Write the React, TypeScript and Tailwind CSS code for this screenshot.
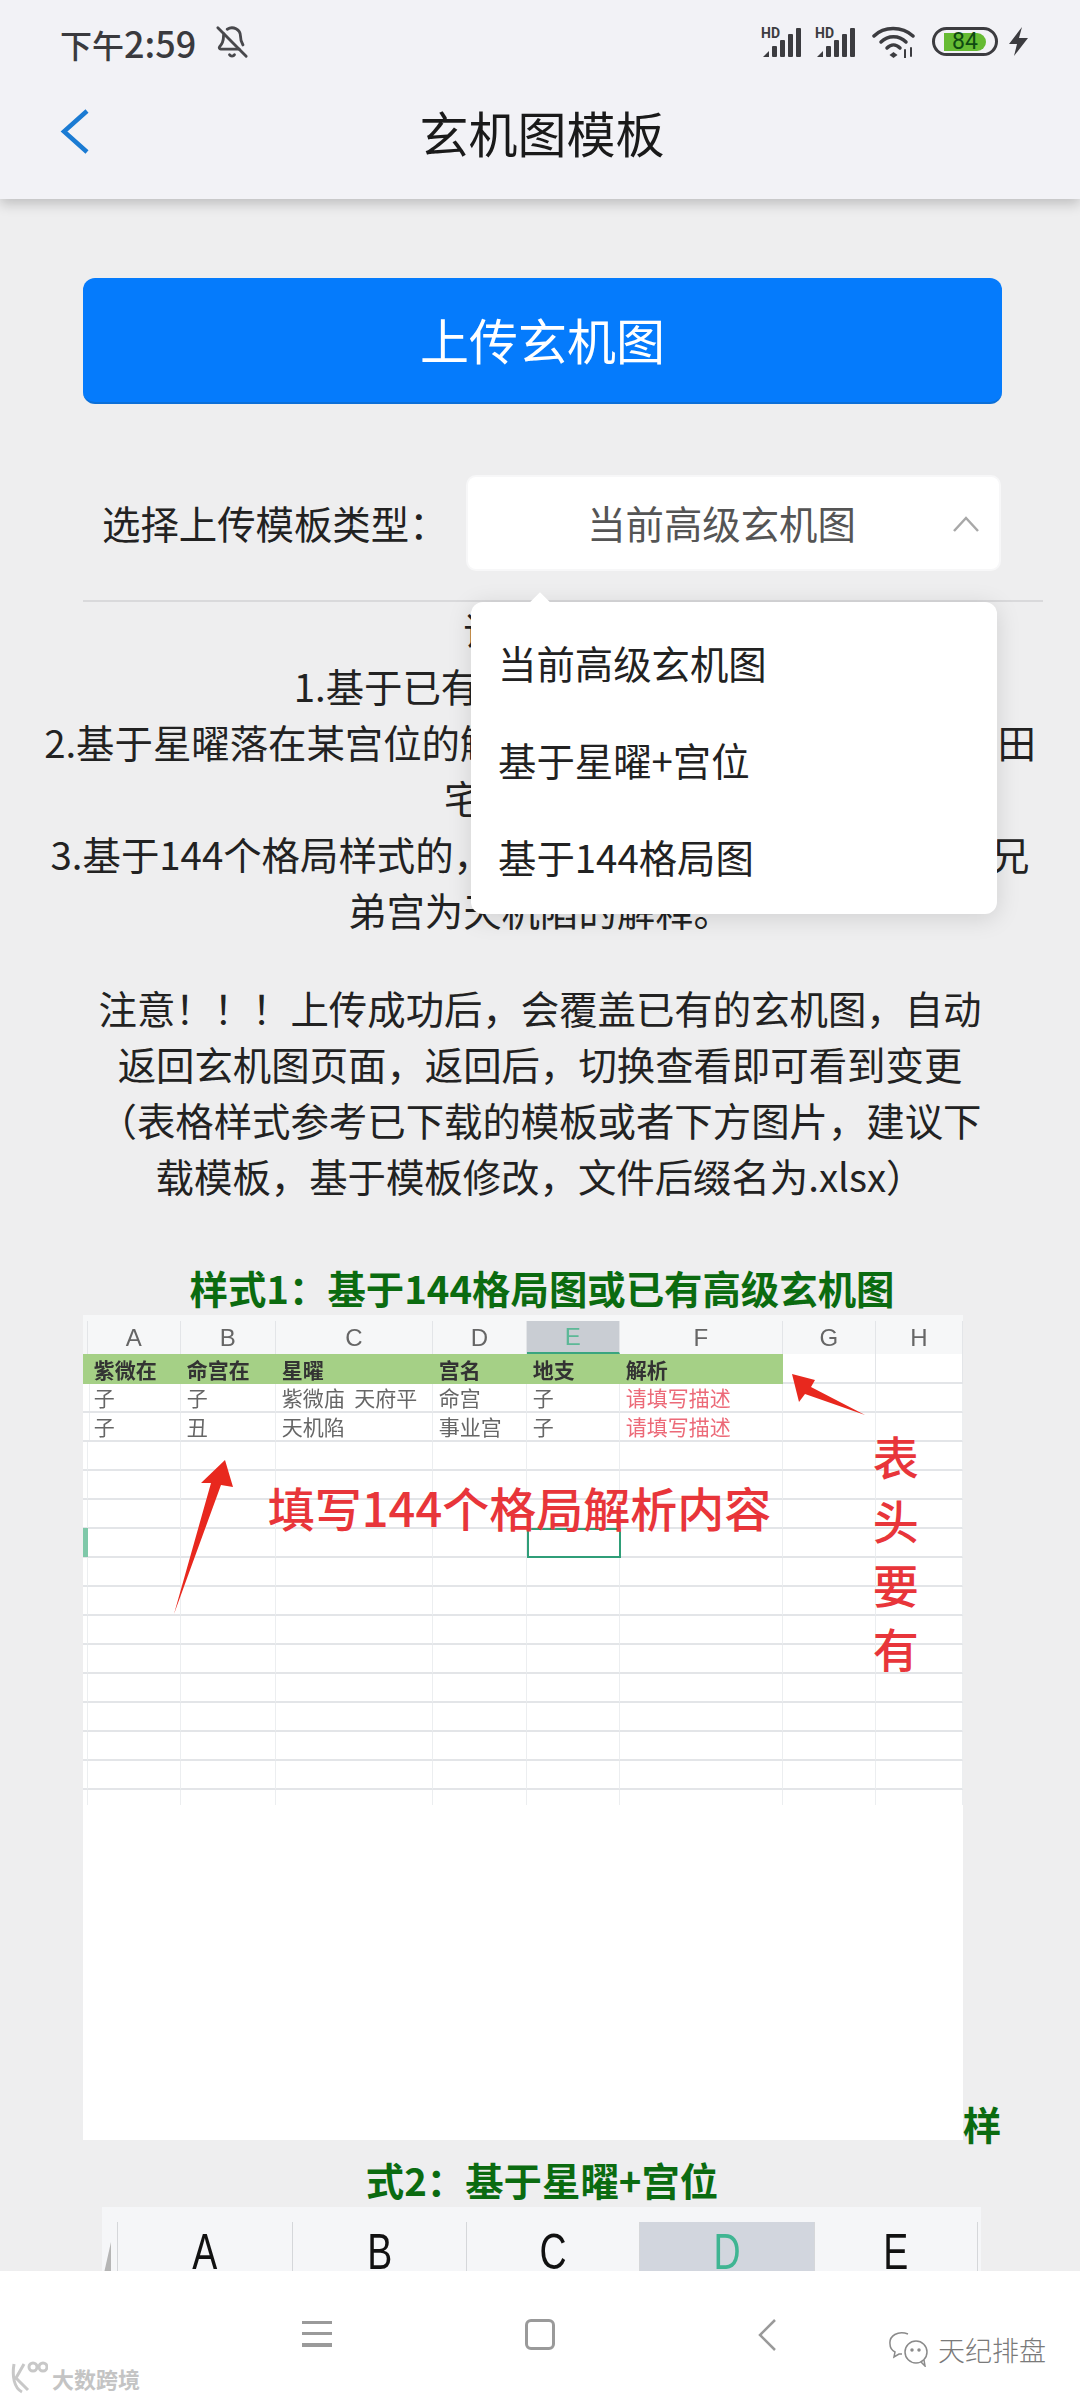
import { BellOff } from 'lucide-react';

const cols = ['', 'A', 'B', 'C', 'D', 'E', 'F', 'G', 'H'];
const hdr = ['', '紫微在', '命宫在', '星曜', '宫名', '地支', '解析'];
const rows = [
  ['', '子', '子', '紫微庙  天府平', '命宫', '子', '请填写描述', '', ''],
  ['', '子', '丑', '天机陷', '事业宫', '子', '请填写描述', '', ''],
];
const EMPTY_ROWS = 12;

function Signal() {
  return (
    <svg width="41" height="31" viewBox="0 0 41 31" fill="#3c3c40">
      <text x="0" y="12" fontSize="14" fontWeight="700" fontFamily="Roboto, sans-serif">HD</text>
      <path d="M2 31 L8 25 V31 Z" />
      <rect x="11" y="20" width="5" height="11" rx="1" />
      <rect x="19" y="14" width="5" height="17" rx="1" />
      <rect x="27" y="8" width="5" height="23" rx="1" />
      <rect x="35" y="2" width="5" height="29" rx="1" />
    </svg>
  );
}

function Wifi() {
  return (
    <svg width="45" height="32" viewBox="0 0 45 32" fill="none" stroke="#3c3c40" strokeWidth="3.5" strokeLinecap="round">
      <path d="M2 10 C12 0 30 0 41 10" />
      <path d="M9 16 C16 9 27 9 34 16" />
      <path d="M15 22 C19 18 24 18 28 22" />
      <path d="M21.5 26 l4 3 l-4 3 l-4 -3 Z" fill="#3c3c40" stroke="none" />
      <path d="M33 24 v8 M39 22 v8" strokeWidth="2" />
    </svg>
  );
}

function Battery() {
  return (
    <div className="flex items-center w-[66px] h-[29px] rounded-full border-[3px] border-[#3c3c40] px-[9px]">
      <div className="w-full h-[18px] rounded-r-full bg-[#66bb33] flex items-center justify-center text-[23px] leading-none text-[#0f4a12] font-['Roboto']">
        84
      </div>
    </div>
  );
}

function StatusBar() {
  return (
    <div className="flex items-center justify-between h-[83px] pl-[60px] pr-[52px]">
      <div className="flex items-center gap-[19px]">
        <span className="font-medium text-[#3a3a3e] text-[32px] whitespace-nowrap">
          下午<span className="text-[36px]">2:59</span>
        </span>
        <BellOff size={34} strokeWidth={2} color="#48484c" />
      </div>
      <div className="flex items-center">
        <Signal />
        <div className="w-[13px]" />
        <Signal />
        <div className="w-[16px]" />
        <Wifi />
        <div className="w-[15px]" />
        <Battery />
        <svg className="ml-[11px]" width="19" height="29" viewBox="0 0 19 29" fill="#3c3c40">
          <path d="M13 0 L0 17 H8 L5 29 L19 11 H10 Z" />
        </svg>
      </div>
    </div>
  );
}

function Sheet() {
  return (
    <div className="relative inline-block align-baseline w-[880px] h-[825px] bg-white overflow-hidden text-left font-normal text-[21px] leading-none">
      <div className="blur-[0.5px]">
        <div className="h-[6px] bg-[#f6f7f8]" />
        <div className="grid grid-cols-[5px_93px_95px_157px_94px_93px_163px_93px_87px] grid-rows-[33px_30px_repeat(14,29px)_15px]">
          {cols.map((c, i) => (
            <div
              key={i}
              className={`flex items-center justify-center text-[24px] font-['Liberation_Sans'] border-r border-[#e3e5e8] ${
                c === 'E' ? 'bg-[#c9cdd3] text-[#5cb897] border-b-2 border-b-[#3aa57f]' : 'bg-[#f6f7f8] text-[#666]'
              }`}
            >
              {c}
            </div>
          ))}
          {cols.map((_, i) => (
            <div
              key={i}
              className={`flex items-center pl-[6px] font-bold text-[#333] ${
                i < 7 ? 'bg-[#a5d086]' : 'border-b-2 border-r border-[#e3e5e8]'
              }`}
            >
              {hdr[i]}
            </div>
          ))}
          {rows.map((r, ri) =>
            r.map((t, i) => (
              <div
                key={`${ri}-${i}`}
                className={`flex items-center pl-[6px] whitespace-pre border-b-2 border-r border-b-[#e3e5e8] border-r-[#eceef0] ${
                  i === 6 ? 'text-[#ec6a78]' : 'text-[#666]'
                }`}
              >
                {t}
              </div>
            )),
          )}
          {Array.from({ length: EMPTY_ROWS * 9 }, (_, i) => (
            <div key={i} className="border-b-2 border-r border-b-[#e3e5e8] border-r-[#eceef0]" />
          ))}
          {/* 最后半行，只有竖线 */}
          {cols.map((_, i) => (
            <div key={i} className="border-r border-[#eceef0]" />
          ))}
        </div>
      </div>

      {/* 贴在截图上的标注 */}
      <div className="absolute left-0 top-[213px] w-[5px] h-[29px] bg-[#7fc8a9]" />
      <div className="absolute left-[444px] top-[213px] w-[94px] h-[30px] border-[2px] border-[#2f9e78]" />
      <div className="absolute left-[185px] top-[164px] text-[47px] leading-[56px] font-medium text-[#e8353a] whitespace-nowrap">
        填写144个格局解析内容
      </div>
      <div className="absolute left-[790px] top-[108px] w-[46px] flex flex-col items-center text-[46px] leading-[64px] text-[#e8353a] font-medium">
        <span>表</span>
        <span>头</span>
        <span>要</span>
        <span>有</span>
      </div>
      <svg className="absolute inset-0" width="880" height="825" viewBox="0 0 880 825" fill="#e8281e">
        <path d="M709 59 L732 65 L728 72 L782 100 L722 79 L716 87 Z" />
        <path d="M142 145 L150 172 L138 170 L91 299 L128 168 L118 168 Z" />
      </svg>
    </div>
  );
}

function Sheet2() {
  return (
    <div className="relative ml-[102px] w-[879px] h-[300px] bg-[#f5f6f8] pt-[15px] font-normal text-[#111]">
      <div className="grid grid-cols-[16px_175px_174px_173px_175px_163px] h-full">
        <div className="border-r border-[#d5d7da] flex items-start">
          <div className="mt-[20px] w-0 h-0 border-l-[9px] border-l-transparent border-b-[40px] border-b-[#b5b5b5]" />
        </div>
        {['A', 'B', 'C', 'D', 'E'].map((c) => (
          <div
            key={c}
            className={`border-r border-[#d5d7da] flex justify-center font-['Liberation_Sans'] text-[50px] leading-[60px] ${
              c === 'D' ? 'bg-[#d2d6de] text-[#3fb592]' : ''
            }`}
          >
            <span className="scale-x-75 block">{c}</span>
          </div>
        ))}
      </div>
    </div>
  );
}

function SelectRow() {
  return (
    <div className="relative flex items-center justify-between h-[92px] pl-[19px] mr-[3px] w-[916px]">
      <span className="text-[38.4px] text-[#222] whitespace-nowrap">选择上传模板类型：</span>
      <div className="relative w-[531px] h-full bg-white rounded-[8px] shadow-[0_0_0_2px_#f7f7f8] flex items-center justify-center pr-[24px]">
        <span className="text-[38.4px] text-[#555]">当前高级玄机图</span>
        <svg className="absolute right-[19px] top-[39px]" width="28" height="16" viewBox="0 0 28 16" fill="none" stroke="#a8a8a8" strokeWidth="2.5">
          <path d="M2 15 L14 2 L26 15" />
        </svg>
        {/* 下拉菜单 */}
        <div className="absolute z-10 left-[3px] top-[125px] w-[526px] h-[312px] bg-white rounded-[12px] shadow-[0_4px_24px_rgba(0,0,0,0.13)] py-[12px]">
          <div className="absolute left-[60px] -top-[6px] w-[18px] h-[18px] bg-white rotate-45" />
          {['当前高级玄机图', '基于星曜+宫位', '基于144格局图'].map((t) => (
            <div key={t} className="relative h-[97px] flex items-center pl-[27px] text-[38.4px] text-[#222]">
              {t}
            </div>
          ))}
        </div>
      </div>
    </div>
  );
}

export default function App() {
  return (
    <div className="h-[2400px] w-[1080px] flex flex-col overflow-hidden relative bg-[#eeeeef] font-['Noto_Sans_CJK_SC',sans-serif] text-[#222]">
      <header className="relative z-20 h-[199px] shrink-0 bg-[#f2f2f6] shadow-[0_5px_12px_rgba(0,0,0,0.2)]">
        <StatusBar />
        <div className="relative flex items-center justify-center h-[98px]">
          <svg className="absolute left-[60px] top-[26px]" width="30" height="45" viewBox="0 0 30 45" fill="none" stroke="#1b7bd3" strokeWidth="4.5">
            <path d="M27 2 L4 22.5 L27 43" />
          </svg>
          <h1 className="text-[49px] font-normal text-[#1a1a1a] ml-[4px]">玄机图模板</h1>
        </div>
      </header>

      <main className="flex-1 min-h-0 overflow-hidden">
        <div className="pl-[83px] pr-[37px] pt-[79px]">
          <button className="w-[919px] h-[126px] rounded-[12px] bg-[#057bfc] border-b-2 border-[#0b6fd8] text-white text-[49px] pb-[2px]">
            上传玄机图
          </button>
          <div className="mt-[73px]">
            <SelectRow />
          </div>
          <div className="mt-[31px] h-[2px] bg-[#d9d9db]" />
        </div>

        <div className="-mt-[1px] text-[38.4px] leading-[56px] text-center text-[#222]">
          <p>
            说明如下
            <br />
            1.基于已有高级玄机图的解释
            <br />
            2.基于星曜落在某宫位的解释，如紫微落在命宫或天机在田
            <br />
            宅宫解释。
            <br />
            3.基于144个格局样式的，如命宫为紫微庙天府平格局，兄
            <br />
            弟宫为天机陷的解释。
          </p>
          <p className="mt-[42px]">
            注意！！！上传成功后，会覆盖已有的玄机图，自动
            <br />
            返回玄机图页面，返回后，切换查看即可看到变更
            <br />
            （表格样式参考已下载的模板或者下方图片，建议下
            <br />
            载模板，基于模板修改，文件后缀名为.xlsx）
          </p>
        </div>

        <div className="mt-[56px] pl-[82px] pr-[78px] text-center text-[38.4px] leading-[56px] font-bold text-[#0b6b10]">
          <div>样式1：基于144格局图或已有高级玄机图</div>
          <div>
            <Sheet />
            样式2：基于星曜+宫位
          </div>
        </div>
        <Sheet2 />
      </main>

      <nav className="relative z-20 h-[129px] shrink-0 bg-white">
        <div className="flex items-start pt-[48px]">
          <div className="ml-[302px] mt-[2px] w-[30px] flex flex-col gap-[8px]">
            <div className="h-[3px] bg-[#9a9a9a]" />
            <div className="h-[3px] bg-[#9a9a9a]" />
            <div className="h-[4px] bg-[#9a9a9a]" />
          </div>
          <div className="ml-[193px] w-[30px] h-[31px] rounded-[6px] border-[3px] border-[#9a9a9a]" />
          <svg className="ml-[202px]" width="20" height="32" viewBox="0 0 20 32" fill="none" stroke="#9a9a9a" strokeWidth="2.5">
            <path d="M18 1 L3 16 L18 31" />
          </svg>
        </div>
        {/* 水印 */}
        <div className="absolute left-[888px] top-[60px] flex items-center gap-[8px]">
          <svg width="42" height="36" viewBox="0 0 42 36" fill="none" stroke="#8a8a8a" strokeWidth="1.5">
            <path d="M20 3 C10 -1 1 5 2 13 C2 17 5 20 7 21 L6 26 L11 23 L14 23" />
            <circle cx="28" cy="21" r="11" />
            <path d="M33 31 L37 35 L36 29" />
            <circle cx="24" cy="19" r="1" fill="#8a8a8a" />
            <circle cx="31" cy="19" r="1" fill="#8a8a8a" />
          </svg>
          <span className="text-[27px] leading-none text-[#7a7a7a] font-light whitespace-nowrap">天纪排盘</span>
        </div>
        <div className="absolute left-[10px] top-[89px] flex items-center gap-[4px]">
          <svg width="38" height="36" viewBox="0 0 38 36" fill="none" stroke="#c8c8c8" strokeWidth="3">
            <path d="M4 4 C2 16 4 28 12 32 M14 4 L6 18 L18 30" />
            <circle cx="23" cy="7" r="4" />
            <circle cx="33" cy="7" r="4" />
          </svg>
          <span className="text-[22px] leading-none text-[#c4c4c4] font-bold whitespace-nowrap">大数跨境</span>
        </div>
      </nav>
    </div>
  );
}
